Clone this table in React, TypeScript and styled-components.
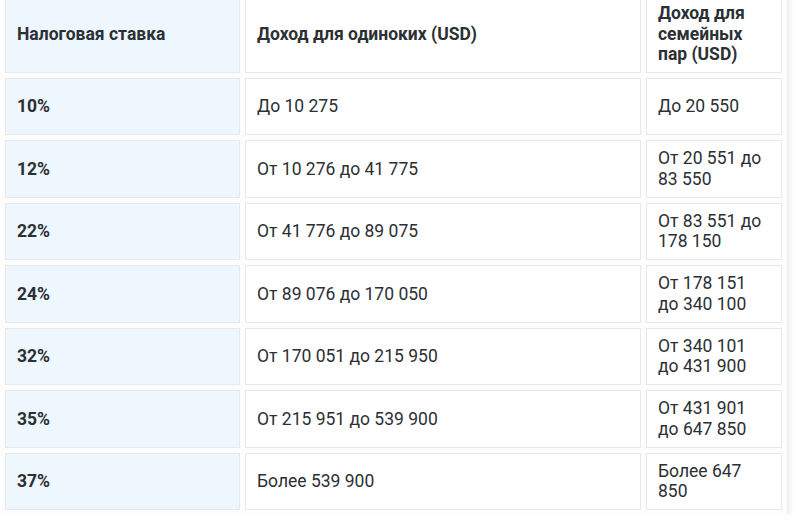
import { FunctionComponent } from "react";
import styled, { createGlobalStyle } from "styled-components";

interface Bracket {
  rate: string;
  single: string;
  couple: string;
}

const brackets: Bracket[] = [
  { rate: "10%", single: "До 10 275", couple: "До 20 550" },
  { rate: "12%", single: "От 10 276 до 41 775", couple: "От 20 551 до 83 550" },
  { rate: "22%", single: "От 41 776 до 89 075", couple: "От 83 551 до 178 150" },
  { rate: "24%", single: "От 89 076 до 170 050", couple: "От 178 151 до 340 100" },
  { rate: "32%", single: "От 170 051 до 215 950", couple: "От 340 101 до 431 900" },
  { rate: "35%", single: "От 215 951 до 539 900", couple: "От 431 901 до 647 850" },
  { rate: "37%", single: "Более 539 900", couple: "Более 647 850" },
];

const App: FunctionComponent = () => {
  return (
    <>
      <GlobalStyle />
      <Wrapper>
        <Table>
          <thead>
            <tr>
              <Cell $accent $bold>
                Налоговая ставка
              </Cell>
              <Cell $bold>Доход для одиноких (USD)</Cell>
              <Cell $bold $narrow>
                Доход для семейных пар (USD)
              </Cell>
            </tr>
          </thead>
          <tbody>
            {brackets.map((b) => (
              <tr key={b.rate}>
                <Cell $accent $bold>
                  {b.rate}
                </Cell>
                <Cell>{b.single}</Cell>
                <Cell $narrow>{b.couple}</Cell>
              </tr>
            ))}
          </tbody>
        </Table>
      </Wrapper>
    </>
  );
};

export default App;

const GlobalStyle = createGlobalStyle`
  body {
    margin: 0;
    background: #ffffff;
    font-family: Roboto, "Liberation Sans", sans-serif;
    color: #2b3034;
    overflow: hidden;
  }
`;

const Wrapper = styled.div`
  width: 787px;
  margin-top: -10px;
  box-shadow: 3px 2px 6px rgba(0, 0, 0, 0.07);
  background: #fdfdfd;
`;

const Table = styled.table`
  border-collapse: separate;
  border-spacing: 5px;
  table-layout: fixed;
  width: 100%;
`;

const Cell = styled.td<{ $accent?: boolean; $bold?: boolean; $narrow?: boolean }>`
  background: ${(p) => (p.$accent ? "#eef6fe" : "#ffffff")};
  border: 1px solid #e7eaed;
  padding: 7px 11px;
  font-size: 17.5px;
  line-height: 20.5px;
  font-weight: ${(p) => (p.$bold ? 700 : 400)};
  vertical-align: middle;
  text-align: left;
  width: ${(p) => (p.$narrow ? "136px" : p.$accent ? "235px" : "auto")};
  box-sizing: border-box;
  height: 57.5px;
`;
